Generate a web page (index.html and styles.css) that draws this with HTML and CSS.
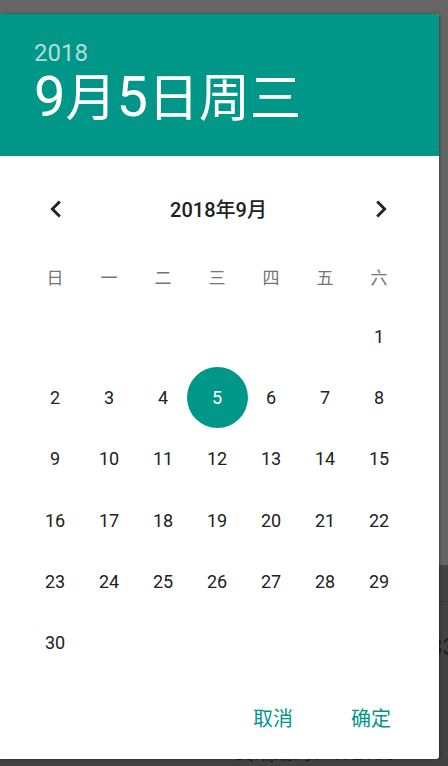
FILE: index.html
```html
<!DOCTYPE html>
<html lang="zh-CN">
<head>
<meta charset="utf-8">
<title>日期选择</title>
<link rel="stylesheet" href="styles.css">
</head>
<body>
<div class="page">
  <div class="page-top"></div>
  <div class="page-panel">
    <div class="panel-row line"></div>
    <div class="panel-row num"><span>设备编号：10233</span></div>
    <div class="panel-row code"><span>终端编码：172133</span></div>
  </div>
</div>

<div class="dialog">
  <div class="header">
    <div class="year">2018</div>
    <div class="date">9<span class="cj">月</span>5<span class="cj">日周三</span></div>
  </div>

  <div class="nav">
    <svg class="chev" viewBox="0 0 24 24"><path d="M15.41 7.41L14 6l-6 6 6 6 1.41-1.41L10.83 12z"/></svg>
    <div class="title">2018年9月</div>
    <svg class="chev" viewBox="0 0 24 24"><path d="M10 6L8.59 7.41 13.17 12l-4.58 4.59L10 18l6-6z"/></svg>
  </div>

  <div class="weekdays">
    <span>日</span><span>一</span><span>二</span><span>三</span><span>四</span><span>五</span><span>六</span>
  </div>

  <div class="days">
    <span></span><span></span><span></span><span></span><span></span><span></span><span class="day">1</span>
    <span class="day">2</span><span class="day">3</span><span class="day">4</span><span class="day sel"><i class="dot">5</i></span><span class="day">6</span><span class="day">7</span><span class="day">8</span>
    <span class="day">9</span><span class="day">10</span><span class="day">11</span><span class="day">12</span><span class="day">13</span><span class="day">14</span><span class="day">15</span>
    <span class="day">16</span><span class="day">17</span><span class="day">18</span><span class="day">19</span><span class="day">20</span><span class="day">21</span><span class="day">22</span>
    <span class="day">23</span><span class="day">24</span><span class="day">25</span><span class="day">26</span><span class="day">27</span><span class="day">28</span><span class="day">29</span>
    <span class="day">30</span>
  </div>

  <div class="actions">
    <span class="btn">取消</span>
    <span class="btn">确定</span>
  </div>
</div>
</body>
</html>
```

FILE: styles.css
```css
* { box-sizing: border-box; }
html, body {
  margin: 0;
  padding: 0;
}
body {
  width: 448px;
  height: 766px;
  overflow: hidden;
  position: relative;
  background: #656565;
  font-family: Roboto, "Noto Sans CJK SC", sans-serif;
}

/* dimmed page behind the dialog */
.page {
  display: flex;
  flex-direction: column;
  width: 460px;
  height: 766px;
}
.page-top {
  height: 577px;
  background: #656565;
}
.page-panel {
  flex: 1;
  background: #424242;
  display: flex;
  flex-direction: column;
}
.panel-row.line {
  height: 37px;
  border-bottom: 1px solid #363636;
}
.panel-row.num {
  height: 62px;
  padding-top: 22px;
  display: flex;
  align-items: center;
  justify-content: flex-end;
  padding-right: 4px;
  font-size: 24px;
  color: #1c1c1c;
}
.panel-row.code {
  padding-left: 236px;
  margin-top: 78px;
  font-size: 19px;
  line-height: 24px;
  color: #1c1c1c;
  white-space: nowrap;
}

/* dialog */
.dialog {
  position: absolute;
  top: 14px;
  left: 0;
  width: 439px;
  height: 745px;
  background: #ffffff;
  border-radius: 0 3px 3px 0;
  box-shadow: 1px 0 3px rgba(0, 0, 0, 0.35);
  overflow: hidden;
  display: flex;
  flex-direction: column;
}
.header {
  height: 142px;
  background: #009688;
  padding: 25px 0 0 34px;
  color: #ffffff;
}
.year {
  font-size: 24px;
  line-height: 28px;
  color: rgba(255, 255, 255, 0.7);
}
.date {
  font-size: 56px;
  line-height: 60px;
  white-space: nowrap;
}
.date .cj {
  font-size: 51px;
  line-height: 1;
}

.nav {
  margin-top: 24px;
  height: 57px;
  display: flex;
  align-items: center;
  padding: 0 41px 0 39px;
}
.chev {
  width: 34px;
  height: 34px;
  fill: #212121;
  flex: none;
}
.title {
  flex: 1;
  text-align: center;
  font-size: 20px;
  font-weight: 500;
  color: #212121;
}

.weekdays,
.days {
  display: grid;
  grid-template-columns: repeat(7, 54px);
  margin-left: 28px;
}
.weekdays {
  margin-top: 22px;
  height: 34px;
  align-items: center;
  font-size: 17px;
  color: #757575;
}
.weekdays span,
.days span {
  text-align: center;
}
.days {
  margin-top: 13px;
  grid-auto-rows: 61.2px;
  font-size: 18px;
  color: #212121;
}
.day {
  display: flex;
  align-items: center;
  justify-content: center;
}
.dot {
  font-style: normal;
  flex: none;
  width: 61px;
  height: 61px;
  border-radius: 50%;
  background: #009688;
  color: #ffffff;
  display: flex;
  align-items: center;
  justify-content: center;
}

.actions {
  margin-top: 20px;
  height: 48px;
  display: flex;
  align-items: center;
  justify-content: flex-end;
  gap: 58px;
  padding-right: 48px;
}
.btn {
  font-size: 20px;
  color: #009688;
}
```
